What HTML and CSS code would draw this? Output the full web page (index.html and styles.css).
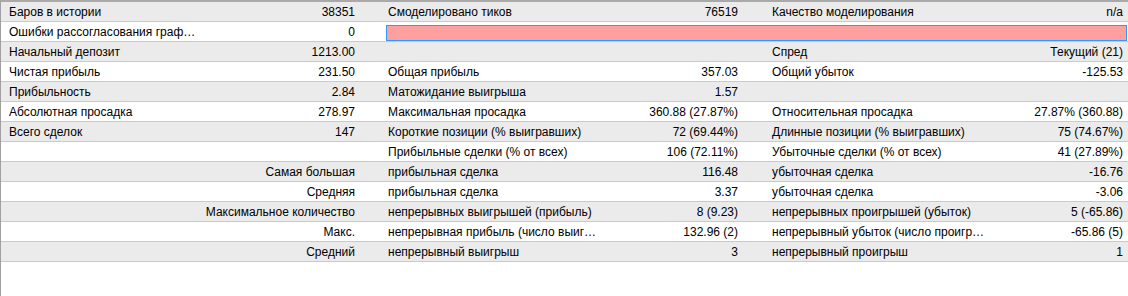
FILE: index.html
```html
<!DOCTYPE html>
<html lang="ru">
<head>
<meta charset="utf-8">
<link rel="stylesheet" href="styles.css">
</head>
<body>
<div class="report">
  <div class="row alt">
    <div class="c1">Баров в истории</div><div class="c2">38351</div>
    <div class="c3">Смоделировано тиков</div><div class="c4">76519</div>
    <div class="c5">Качество моделирования</div><div class="c6">n/a</div>
  </div>
  <div class="row">
    <div class="c1">Ошибки рассогласования графиков</div><div class="c2">0</div>
    <div class="bar-cell"><div class="bar"></div></div>
  </div>
  <div class="row alt">
    <div class="c1">Начальный депозит</div><div class="c2">1213.00</div>
    <div class="c3"></div><div class="c4"></div>
    <div class="c5">Спред</div><div class="c6">Текущий (21)</div>
  </div>
  <div class="row">
    <div class="c1">Чистая прибыль</div><div class="c2">231.50</div>
    <div class="c3">Общая прибыль</div><div class="c4">357.03</div>
    <div class="c5">Общий убыток</div><div class="c6">-125.53</div>
  </div>
  <div class="row alt">
    <div class="c1">Прибыльность</div><div class="c2">2.84</div>
    <div class="c3">Матожидание выигрыша</div><div class="c4">1.57</div>
    <div class="c5"></div><div class="c6"></div>
  </div>
  <div class="row">
    <div class="c1">Абсолютная просадка</div><div class="c2">278.97</div>
    <div class="c3">Максимальная просадка</div><div class="c4">360.88 (27.87%)</div>
    <div class="c5">Относительная просадка</div><div class="c6">27.87% (360.88)</div>
  </div>
  <div class="row alt">
    <div class="c1">Всего сделок</div><div class="c2">147</div>
    <div class="c3">Короткие позиции (% выигравших)</div><div class="c4">72 (69.44%)</div>
    <div class="c5">Длинные позиции (% выигравших)</div><div class="c6">75 (74.67%)</div>
  </div>
  <div class="row">
    <div class="c1"></div><div class="c2"></div>
    <div class="c3">Прибыльные сделки (% от всех)</div><div class="c4">106 (72.11%)</div>
    <div class="c5">Убыточные сделки (% от всех)</div><div class="c6">41 (27.89%)</div>
  </div>
  <div class="row alt">
    <div class="c1"></div><div class="c2">Самая большая</div>
    <div class="c3">прибыльная сделка</div><div class="c4">116.48</div>
    <div class="c5">убыточная сделка</div><div class="c6">-16.76</div>
  </div>
  <div class="row">
    <div class="c1"></div><div class="c2">Средняя</div>
    <div class="c3">прибыльная сделка</div><div class="c4">3.37</div>
    <div class="c5">убыточная сделка</div><div class="c6">-3.06</div>
  </div>
  <div class="row alt">
    <div class="c1"></div><div class="c2 wide">Максимальное количество</div>
    <div class="c3">непрерывных выигрышей (прибыль)</div><div class="c4">8 (9.23)</div>
    <div class="c5">непрерывных проигрышей (убыток)</div><div class="c6">5 (-65.86)</div>
  </div>
  <div class="row">
    <div class="c1"></div><div class="c2">Макс.</div>
    <div class="c3">непрерывная прибыль (число выигрышей)</div><div class="c4">132.96 (2)</div>
    <div class="c5">непрерывный убыток (число проигрышей)</div><div class="c6">-65.86 (5)</div>
  </div>
  <div class="row alt">
    <div class="c1"></div><div class="c2">Средний</div>
    <div class="c3">непрерывный выигрыш</div><div class="c4">3</div>
    <div class="c5">непрерывный проигрыш</div><div class="c6">1</div>
  </div>
</div>
</body>
</html>
```
FILE: styles.css
```css
html, body {
  margin: 0;
  padding: 0;
  background: #ffffff;
}
body {
  width: 1128px;
  height: 296px;
  overflow: hidden;
  font-family: "Liberation Sans", Arial, sans-serif;
  font-size: 12px;
  color: #000000;
}
.report {
  height: 296px;
  box-sizing: border-box;
  border-top: 2px solid #a9a9a9;
  border-left: 1px solid #a0a0a0;
}
.row {
  display: grid;
  grid-template-columns: 204px 180px 223px 160px 222px 138px;
  height: 20px;
  box-sizing: border-box;
  border-bottom: 1px solid #cacaca;
  background: #ffffff;
}
.row.alt {
  background: #ebebeb;
}
.row > div {
  padding-top: 2px;
  line-height: 17px;
  white-space: nowrap;
  overflow: hidden;
  text-overflow: ellipsis;
}
.c1 { padding-left: 8px; padding-right: 6px; }
.c2 { padding-right: 30px; text-align: right; }
.c3 { padding-left: 3px; padding-right: 6px; }
.c4 { padding-right: 30px; text-align: right; }
.c5 { padding-left: 4px; padding-right: 5px; }
.c6 { padding-right: 5px; text-align: right; }
.row > .c2.wide { overflow: visible; }
.row > .bar-cell {
  grid-column: 3 / 7;
  padding: 3px 1px 0 1px;
}
.bar {
  height: 16px;
  box-sizing: border-box;
  background: #ffa0a0;
  border: 1px solid #3399ff;
}
```
